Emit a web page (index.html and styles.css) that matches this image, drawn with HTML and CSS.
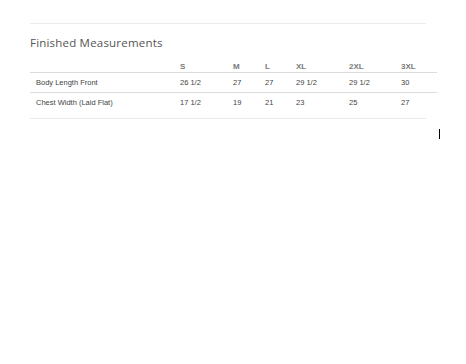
FILE: index.html
```html
<!DOCTYPE html>
<html>
<head>
<meta charset="utf-8">
<link rel="stylesheet" href="styles.css">
</head>
<body>
<div class="wrap">
  <div class="rule"></div>
  <h2 class="title">Finished Measurements</h2>
  <table class="sizes">
    <colgroup>
      <col class="c-label"><col class="c-s"><col class="c-m"><col class="c-l"><col class="c-xl"><col class="c-2xl"><col class="c-3xl">
    </colgroup>
    <thead>
      <tr><th></th><th>S</th><th>M</th><th>L</th><th>XL</th><th>2XL</th><th>3XL</th></tr>
    </thead>
    <tbody>
      <tr><td>Body Length Front</td><td>26 1/2</td><td>27</td><td>27</td><td>29 1/2</td><td>29 1/2</td><td>30</td></tr>
      <tr><td>Chest Width (Laid Flat)</td><td>17 1/2</td><td>19</td><td>21</td><td>23</td><td>25</td><td>27</td></tr>
    </tbody>
  </table>
  <div class="rule bottom"></div>
</div>
<div class="caret"></div>
</body>
</html>
```

FILE: styles.css
```css
html, body { margin: 0; padding: 0; background: #fff; }
body { position: relative; min-height: 364px; }
.wrap {
  margin-left: 30px;
  width: 396px;
  padding-top: 23px;
  font-family: "Liberation Sans", Arial, sans-serif;
}
.rule { border-top: 1px solid #ebebeb; height: 0; }
.rule.bottom { margin-top: 6px; }
.title {
  margin: 12px 0 0 0;
  font-family: "Open Sans", sans-serif;
  font-weight: 400;
  font-size: 11.5px;
  line-height: 14px;
  color: #555;
  letter-spacing: 0.2px;
}
.sizes {
  margin-top: 7px;
  width: 407px;
  border-collapse: collapse;
  table-layout: fixed;
}
.c-label { width: 144px; }
.c-s { width: 53px; }
.c-m { width: 32px; }
.c-l { width: 31px; }
.c-xl { width: 53px; }
.c-2xl { width: 52px; }
.c-3xl { width: 42px; }
.sizes th {
  text-align: left;
  font-size: 8px;
  font-weight: 700;
  color: #7a7a7a;
  padding: 3px 0 0 6px;
  line-height: 9px;
  height: 12px;
  vertical-align: middle;
  border-bottom: 1px solid #dcdcdc;
}
.sizes td {
  text-align: left;
  font-size: 7.5px;
  color: #444;
  padding: 0 0 0 6px;
  height: 19px;
  vertical-align: middle;
  border-bottom: 1px solid #dcdcdc;
}
.sizes tbody tr:last-child td { border-bottom: none; }
.caret {
  position: absolute;
  left: 439px;
  top: 129px;
  width: 1px;
  height: 10px;
  background: #000;
}
```
